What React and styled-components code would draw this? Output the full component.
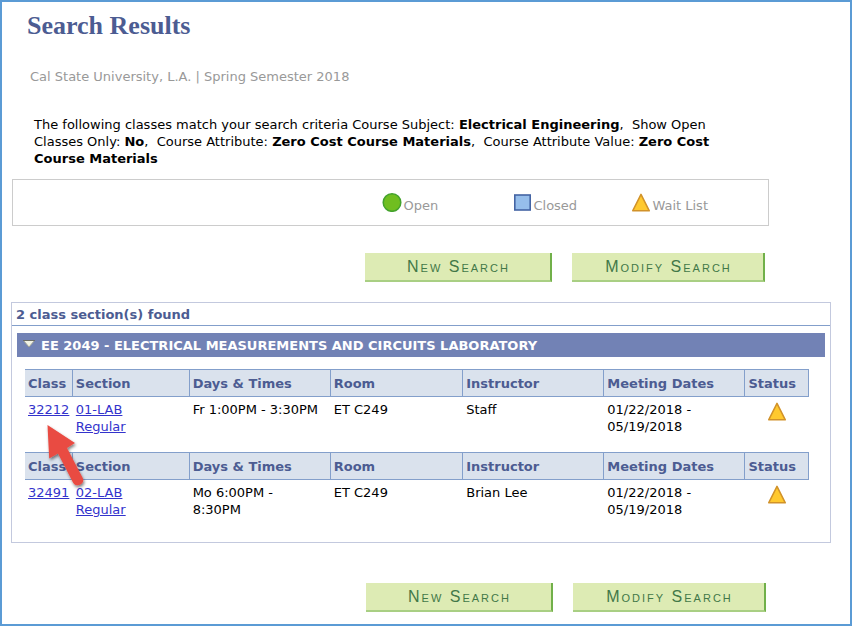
import React, { useState } from "react";

import styled, { createGlobalStyle } from "styled-components";

const GlobalStyle = createGlobalStyle`
  * {
    box-sizing: border-box;
  }
  body {
    margin: 0;
    background: #ffffff;
    color: #000000;
    font-family: Verdana, "DejaVu Sans", sans-serif;
    font-size: 13px;
    line-height: 17px;
  }
`;

const Page = styled.main`
  min-height: 100vh;
  padding: 10px 19px 12px 9px;
  border: 2px solid #5b9bd5;
`;

const Title = styled.h1`
  margin: 0 0 0 16px;
  color: #4c5c92;
  font-family: Georgia, "Liberation Serif", serif;
  font-size: 26px;
  line-height: 28px;
`;

const Term = styled.p`
  margin: 28px 0 0 19px;
  color: #999999;
`;

const Criteria = styled.p`
  max-width: 720px;
  margin: 31px 0 0 23px;
`;

const Legend = styled.ul`
  display: grid;
  grid-template-columns: 131px 118px auto;
  justify-content: end;
  margin: 12px 62px 0 1px;
  padding: 12px 60px 11px 0;
  border: 1px solid #cccccc;
  color: #999999;
  list-style: none;
`;

const LegendItem = styled.li`
  display: flex;
  align-items: flex-start;
  gap: 1px;
  height: 22px;

  span {
    padding-top: 5px;
  }
`;

const Actions = styled.div`
  display: flex;
  justify-content: flex-end;
  gap: 20px;
  margin: ${(props) => (props.$bottom ? "40px 65px 0 0" : "27px 66px 0 0")};
`;

const ActionButton = styled.button`
  width: ${(props) => (props.$wide ? "193px" : "187px")};
  height: 29px;
  padding: 0;
  border: solid;
  border-width: 0 2px 2px 0;
  border-color: transparent #71b04a #a9cf83 transparent;
  background: #ddebb4;
  color: #427848;
  font-family: Arial, "Liberation Sans", sans-serif;
  font-size: 16px;
  font-variant: small-caps;
  letter-spacing: 2px;
  text-indent: 2px;
  cursor: pointer;
`;

const Results = styled.section`
  margin-top: 20px;
  padding-bottom: 7px;
  border: 1px solid #c3c9de;
`;

const Found = styled.h2`
  margin: 0;
  padding: 3px 4px 2px;
  border-bottom: 1px solid #839fcb;
  color: #4c5c92;
  font-size: 13px;
`;

const CourseBar = styled.h3`
  display: flex;
  align-items: flex-start;
  gap: 6px;
  height: 24px;
  margin: 7px 5px 12px;
  padding: 4px 6px 0;
  background: #7282b5;
  color: #ffffff;
  font-size: 13px;
`;

const Toggle = styled.button`
  display: block;
  padding: 3px 0;
  border: 0;
  background: none;
  line-height: 0;
  cursor: pointer;

  svg {
    display: block;
  }
`;

const SectionTable = styled.table`
  width: calc(100% - 34px);
  margin-left: 13px;
  border-collapse: separate;
  border-spacing: 0;
  table-layout: fixed;
`;

const HeadCell = styled.th`
  width: ${(props) => props.$width};
  height: 28px;
  padding: 0 0 0 3px;
  border: solid #839fcb;
  border-width: 1px 1px 1px 0;
  background: #dae2ed;
  color: #4c5c92;
  text-align: left;
  white-space: nowrap;
`;

const Cell = styled.td`
  position: relative;
  height: 55px;
  padding: 4px 0 17px 3px;
  vertical-align: top;
  white-space: pre;
`;

const StatusCell = styled(Cell)`
  padding-left: 0;
  text-align: center;

  svg {
    display: inline-block;
    vertical-align: top;
  }
`;

const SectionLink = styled.a`
  color: #3333cc;
`;

const Pointer = styled.svg`
  position: absolute;
  z-index: 1;
  top: 24px;
  left: 19px;
  pointer-events: none;
`;

const columns = [
  { name: "Class", width: "6.1%" },
  { name: "Section", width: "14.9%" },
  { name: "Days & Times", width: "18%" },
  { name: "Room", width: "16.9%" },
  { name: "Instructor", width: "18%" },
  { name: "Meeting Dates", width: "18%" },
  { name: "Status", width: "8.1%" },
];

const sections = [
  {
    classNbr: "32212",
    section: "01-LAB\nRegular",
    times: "Fr 1:00PM - 3:30PM",
    room: "ET C249",
    instructor: "Staff",
    dates: "01/22/2018 -\n05/19/2018",
    marked: true,
  },
  {
    classNbr: "32491",
    section: "02-LAB\nRegular",
    times: "Mo 6:00PM -\n8:30PM",
    room: "ET C249",
    instructor: "Brian Lee",
    dates: "01/22/2018 -\n05/19/2018",
  },
];

const OpenIcon = () => (
  <svg width="20" height="20" viewBox="0 0 20 20" aria-hidden="true">
    <circle cx="10" cy="10.5" r="8.8" fill="#70be20" stroke="#43a22c" strokeWidth="1.5" />
  </svg>
);

const ClosedIcon = () => (
  <svg width="19" height="20" viewBox="0 0 19 20" aria-hidden="true">
    <rect x="1.8" y="3" width="15.4" height="15" fill="#96beeb" stroke="#4464a4" strokeWidth="1.6" />
  </svg>
);

const WaitIcon = () => (
  <svg width="20" height="20" viewBox="0 0 20 20" aria-hidden="true">
    <path d="M10 2.3 L18.3 18.8 H1.7 Z" fill="#ffc92f" stroke="#d1922a" strokeWidth="1.5" strokeLinejoin="round" />
  </svg>
);

const ArrowPointer = () => (
  <Pointer width="48" height="72" viewBox="0 0 48 72" aria-hidden="true">
    <defs>
      <filter id="arrowShadow" x="-20%" y="-20%" width="150%" height="150%">
        <feDropShadow dx="1" dy="2" stdDeviation="1.5" floodColor="#000000" floodOpacity="0.5" />
      </filter>
    </defs>
    <path
      d="M3.5 4 L31 22 L23 27 L38.6 56.8 C42 63 32 67.5 29 61.5 L14 32.5 L5.2 37.5 Z"
      fill="#e94b43"
      filter="url(#arrowShadow)"
    />
  </Pointer>
);

const SearchActions = ({ bottom }) => (
  <Actions $bottom={bottom}>
    <ActionButton type="button">New Search</ActionButton>
    <ActionButton type="button" $wide>
      Modify Search
    </ActionButton>
  </Actions>
);

const ClassSection = ({ item }) => (
  <SectionTable>
    <thead>
      <tr>
        {columns.map((col) => (
          <HeadCell key={col.name} scope="col" $width={col.width}>
            {col.name}
          </HeadCell>
        ))}
      </tr>
    </thead>
    <tbody>
      <tr>
        <Cell>
          <SectionLink href="#class">{item.classNbr}</SectionLink>
          {item.marked ? <ArrowPointer /> : ""}
        </Cell>
        <Cell>
          <SectionLink href="#section">{item.section}</SectionLink>
        </Cell>
        <Cell>{item.times}</Cell>
        <Cell>{item.room}</Cell>
        <Cell>{item.instructor}</Cell>
        <Cell>{item.dates}</Cell>
        <StatusCell>
          <WaitIcon />
        </StatusCell>
      </tr>
    </tbody>
  </SectionTable>
);

const App = () => {
  const [isOpen, setIsOpen] = useState(true);

  return (
    <React.Fragment>
      <GlobalStyle />
      <Page>
        <Title>Search Results</Title>
        <Term>Cal State University, L.A. | Spring Semester 2018</Term>
        <Criteria>
          The following classes match your search criteria Course Subject:{" "}
          <b>Electrical Engineering</b>, &nbsp;Show Open Classes Only:{" "}
          <b>No</b>, &nbsp;Course Attribute: <b>Zero Cost Course Materials</b>,
          &nbsp;Course Attribute Value: <b>Zero Cost Course Materials</b>
        </Criteria>

        <Legend>
          <LegendItem>
            <OpenIcon />
            <span>Open</span>
          </LegendItem>
          <LegendItem>
            <ClosedIcon />
            <span>Closed</span>
          </LegendItem>
          <LegendItem>
            <WaitIcon />
            <span>Wait List</span>
          </LegendItem>
        </Legend>

        <SearchActions />

        <Results>
          <Found>2 class section(s) found</Found>
          <CourseBar>
            <Toggle
              type="button"
              aria-label="Collapse section"
              aria-expanded={isOpen}
              onClick={() => setIsOpen(!isOpen)}
            >
              <svg width="12" height="8" viewBox="0 0 12 8" aria-hidden="true">
                <path d="M0.5 0.5 H11.5 L6 7 Z" fill="#f1f2e4" stroke="#a3a496" strokeWidth="1" />
                <path d="M0 0.5 H12" stroke="#6d6e68" strokeWidth="1" />
              </svg>
            </Toggle>
            EE 2049 - ELECTRICAL MEASUREMENTS AND CIRCUITS LABORATORY
          </CourseBar>
          {isOpen &&
            sections.map((item) => (
              <ClassSection key={item.classNbr} item={item} />
            ))}
        </Results>

        <SearchActions bottom />
      </Page>
    </React.Fragment>
  );
};

export default App;
